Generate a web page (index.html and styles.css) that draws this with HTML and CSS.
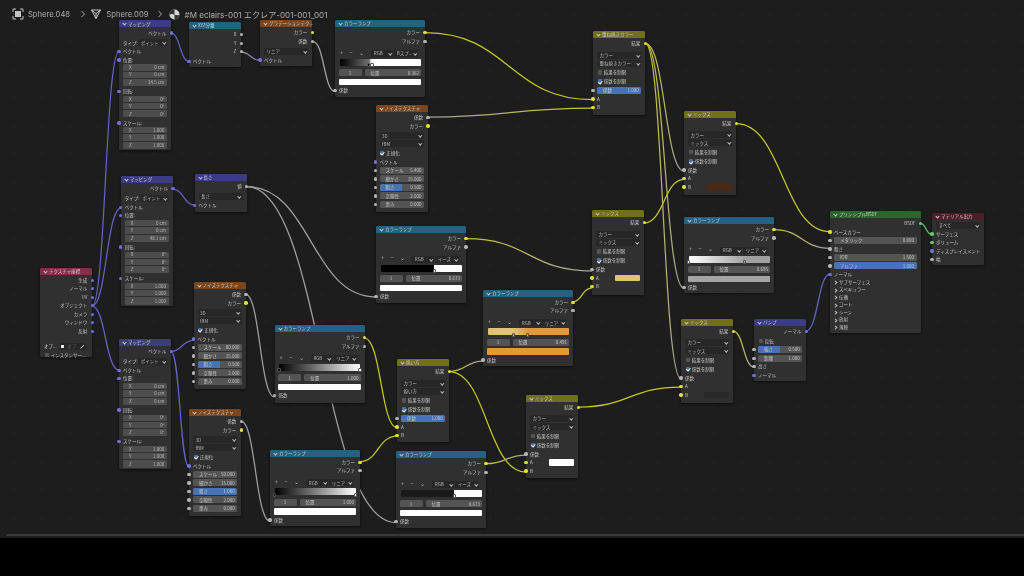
FILE: index.html
```html
<!DOCTYPE html>
<html lang="ja">
<head>
<meta charset="utf-8">
<title>Shader Editor</title>
<link rel="stylesheet" href="styles.css">
</head>
<body>
<main class="editor">
<svg class="links" width="1024" height="537" viewBox="0 0 1024 537" fill="none" stroke-width="1.25">
<defs>
<linearGradient id="yg"><stop offset="0" stop-color="#c7c729"/><stop offset="1" stop-color="#a1a1a1"/></linearGradient>
<linearGradient id="gy"><stop offset="0" stop-color="#a1a1a1"/><stop offset="1" stop-color="#c7c729"/></linearGradient>
<linearGradient id="gb"><stop offset="0" stop-color="#a1a1a1"/><stop offset="1" stop-color="#6363c7"/></linearGradient>
</defs>
<g stroke="#6363c7">
<path d="M92 306C105.500 306 105.500 51.700 119 51.700"/>
<path d="M92 306C106.500 306 106.500 208 121 208"/>
<path d="M92 306C105.500 306 105.500 370 119 370"/>
<path d="M171 33C180 33 180 61.300 189 61.300"/>
<path d="M173 189.300C183.700 189.300 183.700 205 194.500 205"/>
<path d="M171 351.500C182 351.500 182 340.300 193.500 340.300"/>
<path d="M171 351.500C180 351.500 180 467 189 467"/>
<path d="M806 331C818 331 818 274 830 274"/>
</g>
<g stroke="#a1a1a1">
<path d="M313 41.500C324 41.500 324 91.500 335 91.500"/>
<path d="M246.500 186.500C311 186.500 311 297 376 297"/>
<path d="M246.500 186.500C321 186.500 321 522.500 396 522.500"/>
<path d="M245.500 294C260 294 260 397 274.500 397"/>
<path d="M241 421C255.500 421 255.500 521 270 521"/>
</g>
<g stroke="#c7c729">
<path d="M425 32.700C509 32.700 509 99.700 593 99.700"/>
<path d="M736 123.700C783 123.700 783 231.700 830 231.700"/>
<path d="M364.500 338C381 338 381 427.700 397 427.700"/>
<path d="M360 461.700C378 461.700 378 436 397 436"/>
<path d="M573 301.700C582 301.700 582 288 592 288"/>
<path d="M449 371.500C487 371.500 487 472 526 472"/>
<path d="M644 223C664 223 664 179.300 684 179.300"/>
<path d="M578 407C630 407 630 387 681 387"/>
</g>
<path stroke="url(#gb)" d="M241 52C250.500 52 250.500 60.500 260 60.500"/>
<path stroke="url(#gy)" d="M428 117C510 117 510 108 593 108"/>
<path stroke="url(#yg)" d="M645.500 43.700C665 43.700 665 171 684 171"/>
<path stroke="url(#yg)" d="M645.500 43.700C665 43.700 665 288.300 684 288.300"/>
<path stroke="url(#yg)" d="M645.500 43.700C663 43.700 663 378.700 681 378.700"/>
<path stroke="url(#yg)" d="M774 229.700C802 229.700 802 248.300 830 248.300"/>
<path stroke="url(#yg)" d="M733 331C743.500 331 743.500 367 754 367"/>
<path stroke="url(#yg)" d="M466 238.700C529 238.700 529 271 592 271"/>
<path stroke="url(#yg)" d="M449 371.500C466 371.500 466 361 483 361"/>
<path stroke="url(#yg)" d="M486 463.700C506 463.700 506 455 526 455"/>
<path stroke="#63c763" d="M920.500 223.300C926 223.300 926 234.700 932 234.700"/>
</svg>

<nav class="crumbs">
<svg class="ic" width="12" height="12" viewBox="0 0 12 12" fill="none" stroke="#c4c4c4" stroke-width="1"><path d="M1 4V1H4M8 1H11V4M11 8V11H8M4 11H1V8"/><rect x="3" y="3" width="6" height="6" fill="#c4c4c4" stroke="none"/></svg>
<span class="c1">Sphere.048</span>
<svg class="chev chev1" width="6" height="8" viewBox="0 0 6 8" fill="none" stroke="#a8a8a8" stroke-width="1"><path d="M1.500 1L4.500 4L1.500 7"/></svg>
<svg class="ic" width="12" height="12" viewBox="0 0 12 12" fill="none" stroke="#c4c4c4" stroke-width="1"><path d="M1.500 2H10.500L6 10.500ZM1.500 2L6 5.500L10.500 2M6 5.500V10.500"/></svg>
<span class="c2">Sphere.009</span>
<svg class="chev chev2" width="6" height="8" viewBox="0 0 6 8" fill="none" stroke="#a8a8a8" stroke-width="1"><path d="M1.500 1L4.500 4L1.500 7"/></svg>
<svg class="ic" width="11" height="11" viewBox="0 0 11 11"><circle cx="5.500" cy="5.500" r="5" fill="#d8d8d8"/><path d="M5.500 .5A5 5 0 0 0 .5 5.500C2.500 4.500 4 5 5.500 5.500ZM5.500 5.500C7 6 9 7 10.500 5.500A5 5 0 0 1 5.500 10.500Z" fill="#333"/></svg>
<span class="c3">#M eclairs-001 エクレア-001-001_001</span>
</nav>

<section class="node n-map1">
<h3 class="hd h-vec">マッピング</h3>
<div class="r o">ベクトル<i class="s so sv"></i></div>
<div class="r gap type">タイプ:<div class="dd in">ポイント</div></div>
<div class="r">ベクトル<i class="s si sv"></i></div>
<div class="r">位置:<i class="s si sv"></i></div>
<div class="grp"><div class="gf"><span>X</span><span>0 cm</span></div><div class="gf"><span>Y</span><span>0 cm</span></div><div class="gf"><span>Z</span><span>34.5 cm</span></div></div>
<div class="r">回転:<i class="s si sv"></i></div>
<div class="grp"><div class="gf"><span>X</span><span>0°</span></div><div class="gf"><span>Y</span><span>0°</span></div><div class="gf"><span>Z</span><span>0°</span></div></div>
<div class="r">スケール:<i class="s si sv"></i></div>
<div class="grp"><div class="gf"><span>X</span><span>1.000</span></div><div class="gf"><span>Y</span><span>1.000</span></div><div class="gf"><span>Z</span><span>1.000</span></div></div>
</section>

<section class="node n-map2">
<h3 class="hd h-vec">マッピング</h3>
<div class="r o">ベクトル<i class="s so sv"></i></div>
<div class="r gap type">タイプ:<div class="dd in">ポイント</div></div>
<div class="r">ベクトル<i class="s si sv"></i></div>
<div class="r">位置:<i class="s si sv"></i></div>
<div class="grp"><div class="gf"><span>X</span><span>0 cm</span></div><div class="gf"><span>Y</span><span>0 cm</span></div><div class="gf"><span>Z</span><span>48.1 cm</span></div></div>
<div class="r">回転:<i class="s si sv"></i></div>
<div class="grp"><div class="gf"><span>X</span><span>0°</span></div><div class="gf"><span>Y</span><span>0°</span></div><div class="gf"><span>Z</span><span>0°</span></div></div>
<div class="r">スケール:<i class="s si sv"></i></div>
<div class="grp"><div class="gf"><span>X</span><span>1.000</span></div><div class="gf"><span>Y</span><span>1.000</span></div><div class="gf"><span>Z</span><span>1.000</span></div></div>
</section>

<section class="node n-map3">
<h3 class="hd h-vec">マッピング</h3>
<div class="r o">ベクトル<i class="s so sv"></i></div>
<div class="r gap type">タイプ:<div class="dd in">ポイント</div></div>
<div class="r">ベクトル<i class="s si sv"></i></div>
<div class="r">位置:<i class="s si sv"></i></div>
<div class="grp"><div class="gf"><span>X</span><span>0 cm</span></div><div class="gf"><span>Y</span><span>0 cm</span></div><div class="gf"><span>Z</span><span>0 cm</span></div></div>
<div class="r">回転:<i class="s si sv"></i></div>
<div class="grp"><div class="gf"><span>X</span><span>0°</span></div><div class="gf"><span>Y</span><span>0°</span></div><div class="gf"><span>Z</span><span>0°</span></div></div>
<div class="r">スケール:<i class="s si sv"></i></div>
<div class="grp"><div class="gf"><span>X</span><span>1.000</span></div><div class="gf"><span>Y</span><span>1.000</span></div><div class="gf"><span>Z</span><span>1.000</span></div></div>
</section>

<section class="node n-xyz">
<h3 class="hd h-conv">XYZ分離</h3>
<div class="r o">X<i class="s so sf"></i></div>
<div class="r o">Y<i class="s so sf"></i></div>
<div class="r o">Z<i class="s so sf"></i></div>
<div class="r mt1 ind">ベクトル<i class="s si sv"></i></div>
</section>

<section class="node n-grad">
<h3 class="hd h-tex">グラデーションテク...</h3>
<div class="r o">カラー<i class="s so sc"></i></div>
<div class="r o">係数<i class="s so sf"></i></div>
<div class="dd first">リニア</div>
<div class="r ind">ベクトル<i class="s si sv"></i></div>
</section>

<section class="node n-len">
<h3 class="hd h-vec">長さ</h3>
<div class="r o">値<i class="s so sf"></i></div>
<div class="dd first">長さ</div>
<div class="r ind">ベクトル<i class="s si sv"></i></div>
</section>

<section class="node n-coord">
<h3 class="hd h-input">テクスチャ座標</h3>
<div class="r o">生成<i class="s so sv"></i></div>
<div class="r o">ノーマル<i class="s so sv"></i></div>
<div class="r o">UV<i class="s so sv"></i></div>
<div class="r o">オブジェクト<i class="s so sv"></i></div>
<div class="r o">カメラ<i class="s so sv"></i></div>
<div class="r o">ウィンドウ<i class="s so sv"></i></div>
<div class="r o">反射<i class="s so sv"></i></div>
<div class="r objrow">オブ...<div class="objf"><i class="sq"></i><span>オブ</span><svg width="5" height="5" viewBox="0 0 5 5" stroke="#ddd" stroke-width="1"><path d="M.5 4.500L4 1"/></svg></div></div>
<div class="ck"><i class="box"></i>インスタンサー...</div>
</section>

<section class="node n-noise1">
<h3 class="hd h-tex">ノイズテクスチャ</h3>
<div class="r o">係数<i class="s so sf"></i></div>
<div class="r o">カラー<i class="s so sc"></i></div>
<div class="dd first">3D</div>
<div class="dd">fBM</div>
<div class="ck on"><i class="box"></i>正規化</div>
<div class="r ind">ベクトル<i class="s si sv"></i></div>
<div class="r ff"><i class="s si sf"></i><div class="f"><span>スケール</span><span>5.400</span></div></div>
<div class="r ff"><i class="s si sf"></i><div class="f"><span>細かさ</span><span>15.000</span></div></div>
<div class="r ff"><i class="s si sf"></i><div class="f half"><span>粗さ</span><span>0.500</span></div></div>
<div class="r ff"><i class="s si sf"></i><div class="f"><span>空隙性</span><span>2.000</span></div></div>
<div class="r ff"><i class="s si sf"></i><div class="f"><span>歪み</span><span>0.000</span></div></div>
</section>

<section class="node n-noise2">
<h3 class="hd h-tex">ノイズテクスチャ</h3>
<div class="r o">係数<i class="s so sf"></i></div>
<div class="r o">カラー<i class="s so sc"></i></div>
<div class="dd first">3D</div>
<div class="dd">fBM</div>
<div class="ck on"><i class="box"></i>正規化</div>
<div class="r ind">ベクトル<i class="s si sv"></i></div>
<div class="r ff"><i class="s si sf"></i><div class="f"><span>スケール</span><span>80.000</span></div></div>
<div class="r ff"><i class="s si sf"></i><div class="f"><span>細かさ</span><span>15.000</span></div></div>
<div class="r ff"><i class="s si sf"></i><div class="f half"><span>粗さ</span><span>0.500</span></div></div>
<div class="r ff"><i class="s si sf"></i><div class="f"><span>空隙性</span><span>2.000</span></div></div>
<div class="r ff"><i class="s si sf"></i><div class="f"><span>歪み</span><span>0.000</span></div></div>
</section>

<section class="node n-noise3">
<h3 class="hd h-tex">ノイズテクスチャ</h3>
<div class="r o">係数<i class="s so sf"></i></div>
<div class="r o">カラー<i class="s so sc"></i></div>
<div class="dd first">3D</div>
<div class="dd">fBM</div>
<div class="ck on"><i class="box"></i>正規化</div>
<div class="r ind">ベクトル<i class="s si sv"></i></div>
<div class="r ff"><i class="s si sf"></i><div class="f"><span>スケール</span><span>50.000</span></div></div>
<div class="r ff"><i class="s si sf"></i><div class="f"><span>細かさ</span><span>15.000</span></div></div>
<div class="r ff"><i class="s si sf"></i><div class="f full"><span>粗さ</span><span>1.000</span></div></div>
<div class="r ff"><i class="s si sf"></i><div class="f"><span>空隙性</span><span>2.000</span></div></div>
<div class="r ff"><i class="s si sf"></i><div class="f"><span>歪み</span><span>0.000</span></div></div>
</section>

<section class="node ramp n-r1">
<h3 class="hd h-conv">カラーランプ</h3>
<div class="r o">カラー<i class="s so sc"></i></div>
<div class="r o">アルファ<i class="s so sf"></i></div>
<div class="tools"><span>+</span><span>−</span><span>⌄</span><div class="dd rgb">RGB</div><div class="dd rint">Bスプ...</div></div>
<div class="bar g-a"><i class="hdl bk" style="left:36%"></i><i class="hdl wh" style="left:40%"></i></div>
<div class="idx"><div class="f one">1</div><div class="f pos"><span>位置</span><span>0.362</span></div></div>
<div class="swatch"></div>
<div class="r ind">係数<i class="s si sf"></i></div>
</section>

<section class="node ramp n-r2">
<h3 class="hd h-conv">カラーランプ</h3>
<div class="r o">カラー<i class="s so sc"></i></div>
<div class="r o">アルファ<i class="s so sf"></i></div>
<div class="tools"><span>+</span><span>−</span><span>⌄</span><div class="dd rgb">RGB</div><div class="dd rint">リニア</div></div>
<div class="bar g-b"><i class="hdl wh" style="left:0"></i><i class="hdl gr big" style="left:69%"></i></div>
<div class="idx"><div class="f one">1</div><div class="f pos"><span>位置</span><span>0.695</span></div></div>
<div class="swatch sw-grey"></div>
<div class="r ind">係数<i class="s si sf"></i></div>
</section>

<section class="node ramp n-r3">
<h3 class="hd h-conv">カラーランプ</h3>
<div class="r o">カラー<i class="s so sc"></i></div>
<div class="r o">アルファ<i class="s so sf"></i></div>
<div class="tools"><span>+</span><span>−</span><span>⌄</span><div class="dd rgb">RGB</div><div class="dd rint">リニア</div></div>
<div class="bar g-c"><i class="hdl bk" style="left:0"></i><i class="hdl wh" style="left:100%"></i></div>
<div class="idx"><div class="f one">1</div><div class="f pos"><span>位置</span><span>1.000</span></div></div>
<div class="swatch"></div>
<div class="r ind">係数<i class="s si sf"></i></div>
</section>

<section class="node ramp n-r4">
<h3 class="hd h-conv">カラーランプ</h3>
<div class="r o">カラー<i class="s so sc"></i></div>
<div class="r o">アルファ<i class="s so sf"></i></div>
<div class="tools"><span>+</span><span>−</span><span>⌄</span><div class="dd rgb">RGB</div><div class="dd rint">リニア</div></div>
<div class="bar g-c"><i class="hdl bk" style="left:0"></i><i class="hdl wh" style="left:100%"></i></div>
<div class="idx"><div class="f one">1</div><div class="f pos"><span>位置</span><span>1.000</span></div></div>
<div class="swatch"></div>
<div class="r ind">係数<i class="s si sf"></i></div>
</section>

<section class="node ramp n-r5">
<h3 class="hd h-conv">カラーランプ</h3>
<div class="r o">カラー<i class="s so sc"></i></div>
<div class="r o">アルファ<i class="s so sf"></i></div>
<div class="tools"><span>+</span><span>−</span><span>⌄</span><div class="dd rgb">RGB</div><div class="dd rint">イーズ</div></div>
<div class="bar g-d"><i class="hdl wh" style="left:67%"></i></div>
<div class="idx"><div class="f one">1</div><div class="f pos"><span>位置</span><span>0.673</span></div></div>
<div class="swatch"></div>
<div class="r ind">係数<i class="s si sf"></i></div>
</section>

<section class="node ramp n-r6">
<h3 class="hd h-conv">カラーランプ</h3>
<div class="r o">カラー<i class="s so sc"></i></div>
<div class="r o">アルファ<i class="s so sf"></i></div>
<div class="tools"><span>+</span><span>−</span><span>⌄</span><div class="dd rgb">RGB</div><div class="dd rint">リニア</div></div>
<div class="bar g-e"><i class="hdl or" style="left:32%"></i><i class="hdl or" style="left:49%"></i></div>
<div class="idx"><div class="f one">1</div><div class="f pos"><span>位置</span><span>0.491</span></div></div>
<div class="swatch sw-orange"></div>
<div class="r ind">係数<i class="s si sf"></i></div>
</section>

<section class="node ramp n-r7">
<h3 class="hd h-conv">カラーランプ</h3>
<div class="r o">カラー<i class="s so sc"></i></div>
<div class="r o">アルファ<i class="s so sf"></i></div>
<div class="tools"><span>+</span><span>−</span><span>⌄</span><div class="dd rgb">RGB</div><div class="dd rint">イーズ</div></div>
<div class="bar g-f"><i class="hdl wh" style="left:67%"></i></div>
<div class="idx"><div class="f one">1</div><div class="f pos"><span>位置</span><span>0.673</span></div></div>
<div class="swatch"></div>
<div class="r ind">係数<i class="s si sf"></i></div>
</section>

<section class="node n-m1">
<h3 class="hd h-mix">重ね焼きカラー</h3>
<div class="r o">結果<i class="s so sc"></i></div>
<div class="dd first wide">カラー</div>
<div class="dd">重ね焼きカラー</div>
<div class="ck"><i class="box"></i>結果を制限</div>
<div class="ck on"><i class="box"></i>係数を制限</div>
<div class="r ff"><i class="s si sf"></i><div class="f full"><span>係数</span><span>1.000</span></div></div>
<div class="r ind">A<i class="s si sc"></i></div>
<div class="r ind">B<i class="s si sc"></i></div>
</section>

<section class="node n-m2">
<h3 class="hd h-mix">ミックス</h3>
<div class="r o">結果<i class="s so sc"></i></div>
<div class="dd first wide">カラー</div>
<div class="dd">ミックス</div>
<div class="ck"><i class="box"></i>結果を制限</div>
<div class="ck on"><i class="box"></i>係数を制限</div>
<div class="r ind">係数<i class="s si sf"></i></div>
<div class="r ind">A<i class="s si sc"></i></div>
<div class="r ind">B<i class="s si sc"></i><b class="sw sw-brown"></b></div>
</section>

<section class="node n-m3">
<h3 class="hd h-mix">ミックス</h3>
<div class="r o">結果<i class="s so sc"></i></div>
<div class="dd first wide">カラー</div>
<div class="dd">ミックス</div>
<div class="ck"><i class="box"></i>結果を制限</div>
<div class="ck on"><i class="box"></i>係数を制限</div>
<div class="r ind">係数<i class="s si sf"></i></div>
<div class="r ind">A<i class="s si sc"></i><b class="sw sw-gold"></b></div>
<div class="r ind">B<i class="s si sc"></i></div>
</section>

<section class="node n-m4">
<h3 class="hd h-mix">焼い方</h3>
<div class="r o">結果<i class="s so sc"></i></div>
<div class="dd first wide">カラー</div>
<div class="dd">焼い方</div>
<div class="ck"><i class="box"></i>結果を制限</div>
<div class="ck on"><i class="box"></i>係数を制限</div>
<div class="r ff"><i class="s si sf"></i><div class="f full"><span>係数</span><span>1.000</span></div></div>
<div class="r ind">A<i class="s si sc"></i></div>
<div class="r ind">B<i class="s si sc"></i></div>
</section>

<section class="node n-m5">
<h3 class="hd h-mix">ミックス</h3>
<div class="r o">結果<i class="s so sc"></i></div>
<div class="dd first wide">カラー</div>
<div class="dd">ミックス</div>
<div class="ck"><i class="box"></i>結果を制限</div>
<div class="ck on"><i class="box"></i>係数を制限</div>
<div class="r ind">係数<i class="s si sf"></i></div>
<div class="r ind">A<i class="s si sc"></i><b class="sw sw-white"></b></div>
<div class="r ind">B<i class="s si sc"></i></div>
</section>

<section class="node n-m6">
<h3 class="hd h-mix">ミックス</h3>
<div class="r o">結果<i class="s so sc"></i></div>
<div class="dd first wide">カラー</div>
<div class="dd">ミックス</div>
<div class="ck"><i class="box"></i>結果を制限</div>
<div class="ck on"><i class="box"></i>係数を制限</div>
<div class="r ind">係数<i class="s si sf"></i></div>
<div class="r ind">A<i class="s si sc"></i></div>
<div class="r ind">B<i class="s si sc"></i><b class="sw sw-dark"></b></div>
</section>

<section class="node n-bump">
<h3 class="hd h-vec">バンプ</h3>
<div class="r o">ノーマル<i class="s so sv"></i></div>
<div class="ck first"><i class="box"></i>反転</div>
<div class="r ff"><i class="s si sf"></i><div class="f half"><span>強さ</span><span>0.500</span></div></div>
<div class="r ff"><i class="s si sf"></i><div class="f"><span>距離</span><span>1.000</span></div></div>
<div class="r ind">高さ<i class="s si sf"></i></div>
<div class="r ind">ノーマル<i class="s si sv"></i></div>
</section>

<section class="node n-bsdf">
<h3 class="hd h-sh">プリンシプルBSDF</h3>
<div class="r o">BSDF<i class="s so sg"></i></div>
<div class="r ind">ベースカラー<i class="s si sc"></i></div>
<div class="r ff"><i class="s si sf"></i><div class="f"><span>メタリック</span><span>0.000</span></div></div>
<div class="r ind">粗さ<i class="s si sf"></i></div>
<div class="r ff"><i class="s si sf"></i><div class="f"><span>IOR</span><span>1.500</span></div></div>
<div class="r ff"><i class="s si sf"></i><div class="f full"><span>アルファ</span><span>1.000</span></div></div>
<div class="r ind">ノーマル<i class="s si sv"></i></div>
<div class="pn pn1">サブサーフェス</div>
<div class="pn">スペキュラー</div>
<div class="pn">伝播</div>
<div class="pn">コート</div>
<div class="pn">シーン</div>
<div class="pn">放射</div>
<div class="pn">薄膜</div>
</section>

<section class="node n-out">
<h3 class="hd h-out">マテリアル出力</h3>
<div class="dd firstout">すべて</div>
<div class="r ind">サーフェス<i class="s si sg"></i></div>
<div class="r ind">ボリューム<i class="s si sg"></i></div>
<div class="r ind">ディスプレイスメント<i class="s si sv"></i></div>
<div class="r ind">幅<i class="s si sf"></i></div>
</section>

<div class="scrollbar"></div>
</main>
</body>
</html>
```
FILE: styles.css
```css
* { box-sizing: border-box; margin: 0; padding: 0; }
html, body { width: 1024px; height: 576px; overflow: hidden; background: #000; }
body { font-family: "Noto Sans CJK JP", "Noto Sans", sans-serif; }

.editor {
  position: relative;
  width: 1024px;
  height: 537.5px;
  overflow: hidden;
  background-color: #1d1d1d;
  background-image: radial-gradient(circle, #272727 .6px, transparent .9px);
  background-size: 28px 28px;
  filter: blur(.4px);
}
.links { position: absolute; left: 0; top: 0; }

.crumbs {
  position: absolute; left: 12px; top: 8px; height: 12px;
  display: flex; align-items: center;
  font: 7.6px Inter, "Noto Sans CJK JP", sans-serif;
  color: #aeaeae;
}
.crumbs .ic { flex: none; }
.crumbs .chev { flex: none; }
.chev1 { margin: 0 4px 0 10.5px; }
.chev2 { margin: 0 6px 0 9px; }
.c1 { margin-left: 4px; width: 41px; white-space: nowrap; }
.c2 { margin-left: 5px; width: 41px; white-space: nowrap; }
.c3 { margin-left: 5px; white-space: nowrap; font-size: 8.1px; }

.scrollbar { position: absolute; left: 6px; right: 0; bottom: 1.5px; height: 2.5px; background: #393939; border-radius: 1px 0 0 1px; }

/* nodes */
.node {
  position: absolute;
  width: 52.3px;
  background: #303030;
  border-radius: 1.5px;
  box-shadow: 0 1px 3px rgba(0,0,0,.55);
  font-size: 4.5px;
  line-height: 1;
  color: #c4c4c4;
  white-space: nowrap;
}
.ramp { width: 90px; }
.n-map1 { left: 119px; top: 20.2px; height: 130px; }
.n-map2 { left: 120.7px; top: 176px; height: 130px; }
.n-map3 { left: 119px; top: 339px; height: 130px; }
.n-xyz { left: 189px; top: 22px; height: 45px; }
.n-grad { left: 260px; top: 20px; height: 46px; }
.n-len { left: 194.5px; top: 174px; height: 38px; }
.n-coord { left: 40px; top: 267.5px; height: 89.5px; }
.n-noise1 { left: 375.6px; top: 104.7px; height: 107px; }
.n-noise2 { left: 193.6px; top: 281.6px; height: 107px; }
.n-noise3 { left: 189px; top: 408.7px; height: 107px; }
.n-r1 { left: 335px; top: 20px; height: 76.7px; }
.n-r2 { left: 684px; top: 216.7px; height: 76.7px; }
.n-r3 { left: 274.6px; top: 325px; height: 78px; }
.n-r4 { left: 270px; top: 449.5px; height: 76.7px; }
.n-r5 { left: 376px; top: 225.7px; height: 77px; }
.n-r6 { left: 483px; top: 289.5px; height: 76.7px; }
.n-r7 { left: 396px; top: 451px; height: 76.7px; }
.n-m1 { left: 593px; top: 31px; height: 84px; }
.n-m2 { left: 684px; top: 110.7px; height: 84px; }
.n-m3 { left: 592px; top: 210px; height: 84.5px; }
.n-m4 { left: 397px; top: 359px; height: 83px; }
.n-m5 { left: 526px; top: 394.5px; height: 83.5px; }
.n-m6 { left: 681px; top: 318.5px; height: 84px; }
.n-bump { left: 754px; top: 318.5px; height: 62px; }
.n-bsdf { left: 830px; top: 210.7px; width: 90.5px; height: 122px; }
.n-out { left: 932px; top: 212.5px; height: 52.5px; }

.hd {
  height: 7.2px; padding-left: 9px;
  display: flex; align-items: center; position: relative;
  font-size: 4.5px; font-weight: 400; color: #cdcdcd;
  border-radius: 1.5px 1.5px 0 0;
  margin-bottom: 1.3px;
}
.hd::before {
  content: ""; position: absolute; left: 4px; top: 2.1px;
  width: 2px; height: 2px;
  border-right: .6px solid #ccc; border-bottom: .6px solid #ccc;
  transform: rotate(45deg);
}
.h-vec { background: #3c3c83; }
.h-conv { background: #246283; }
.h-tex { background: #79461d; }
.h-mix { background: #6f6f1c; }
.h-input { background: #83314a; }
.h-sh { background: #2b652b; }
.h-out { background: #4e1f2b; }

/* rows */
.r { position: relative; display: flex; align-items: center; height: 8.5px; padding: 0 4px; }
.o { justify-content: flex-end; padding-right: 5px; }
.ind { padding-left: 4px; }
.gap { margin-top: 1.5px; }
.mt1 { margin-top: 1px; }
.ff { padding: 0 4px; }

.s { position: absolute; top: 50%; width: 3.4px; height: 3.4px; margin-top: -1.7px; border-radius: 50%; }
.si { left: -1.7px; }
.so { right: -1.7px; }
.sv { background: #7070e0; }
.sc { background: #e0e030; }
.sf { background: #b4b4b4; }
.sg { background: #63d063; }

.type { justify-content: space-between; padding-right: 4px; }
.dd {
  position: relative; height: 7px; margin: 1.1px 4px; padding-left: 2.5px;
  display: flex; align-items: center;
  background: #272727; border-radius: 1.5px; color: #bdbdbd;
}
.dd::after {
  content: ""; position: absolute; right: 2px; top: 1.9px;
  width: 1.6px; height: 1.6px;
  border-right: .5px solid #bbb; border-bottom: .5px solid #bbb;
  transform: rotate(45deg);
}
.dd.in { margin: 0; width: 29px; }
.dd.first { margin-top: 2.2px; }
.dd.wide { margin-top: 3.7px; }
.dd.firstout { margin-top: 2.1px; margin-bottom: 1.1px; }

.ck { display: flex; align-items: center; height: 9.2px; padding-left: 4.5px; }
.ck.first { margin-top: 1.5px; height: 8.5px; }
.box { width: 4.4px; height: 4.4px; margin-right: 1.8px; border-radius: 1px; background: #545454; position: relative; flex: none; }
.ck.on .box { background: #4772b3; }
.ck.on .box::after {
  content: ""; position: absolute; left: 1.3px; top: .4px;
  width: 1.5px; height: 2.6px;
  border-right: .6px solid #fff; border-bottom: .6px solid #fff;
  transform: rotate(40deg);
}

.f {
  flex: 1; height: 7px; display: flex; align-items: center; justify-content: space-between;
  padding: 0 2.5px 0 6px; background: #545454; border-radius: 1.5px; color: #c8c8c8;
}
.f.half { background: linear-gradient(90deg, #4772b3 50%, #545454 50%); }
.f.full { background: #4772b3; }

.grp { margin: 0 4px 1.2px; padding-top: .2px; }
.gf {
  height: 7.2px; display: flex; align-items: center; justify-content: space-between;
  padding: 0 3px 0 6px; background: #4d4d4d; border-bottom: .5px solid #303030; color: #bcbcbc;
}
.gf:first-child { border-radius: 1.5px 1.5px 0 0; }
.gf:last-child { border-radius: 0 0 1.5px 1.5px; border-bottom: 0; }

/* colour ramp */
.tools {
  display: flex; align-items: center; height: 8.4px; margin-top: 3.8px; padding-left: 5px; color: #bbb;
}
.tools > span { width: 9.6px; font-size: 5.5px; }
.tools .dd { margin: 0; }
.tools .rgb { width: 22px; margin-left: 2.5px; border-radius: 1.5px 0 0 1.5px; }
.tools .rint { width: 24px; margin-left: 1px; border-radius: 0 1.5px 1.5px 0; }
.bar { position: relative; height: 7px; margin: 1.3px 4.5px 0; border-radius: 1px; }
.g-a { background: linear-gradient(90deg, #000 0, #707070 36%, #e8e8e8 38%, #fff 42%); }
.g-b { background: linear-gradient(90deg, #fff 0, #a0a0a0 69%, #a0a0a0 100%); }
.g-c { background: linear-gradient(90deg, #000 0, #fff 100%); }
.g-d { background: linear-gradient(90deg, #000 0, #000 65%, #fff 66%); }
.g-e { background: linear-gradient(90deg, #dfc273 0, #dfc273 32%, #e09a3b 49%, #e09a3b 100%); }
.g-f { background: linear-gradient(90deg, #1a1a1a 0, #1a1a1a 65%, #fff 66%); }
.hdl {
  position: absolute; bottom: -1.4px; width: 3.4px; height: 4px; margin-left: -1.7px;
  border-radius: 1px 1px 0 0; border: .4px solid #555;
}
.hdl.wh { background: #fff; }
.hdl.bk { background: #000; }
.hdl.gr { background: #9a9a9a; }
.hdl.or { background: #e09a3b; }
.idx { display: flex; gap: 3px; margin: 3.5px 3.6px 0; }
.idx .f { height: 7px; }
.idx .one { flex: none; width: 23px; justify-content: center; padding: 0; }
.swatch { height: 6.5px; margin: 2.5px 3.6px 0; background: #fff; border-radius: 1px; }
.sw-grey { background: #a4a4a4; }
.sw-orange { background: #e09a3b; }
.swatch + .r { margin-top: .8px; }

.sw { position: absolute; right: 4px; top: 1px; width: 25px; height: 6.5px; border-radius: 1px; }
.sw-brown { background: #4c2910; }
.sw-gold { background: #dfc273; }
.sw-white { background: #fff; }
.sw-dark { background: #282828; }

/* texture coordinate object row */
.objrow { margin-top: 6.5px; }
.objf { display: flex; align-items: center; justify-content: space-between; margin-left: 3px; padding: 0 1px; width: 26px; height: 7px; background: #272727; border-radius: 1.5px; color: #666; }
.sq { width: 3px; height: 3px; background: #eee; }
.n-coord .ck { margin-top: .2px; }

/* panel rows */
.pn { position: relative; height: 7.5px; display: flex; align-items: center; padding-left: 9px; }
.pn1 { margin-top: -.4px; }
.pn::before {
  content: ""; position: absolute; left: 4.3px; top: 2.8px; width: 1.7px; height: 1.7px;
  border-right: .5px solid #bbb; border-top: .5px solid #bbb; transform: rotate(45deg);
}
```
